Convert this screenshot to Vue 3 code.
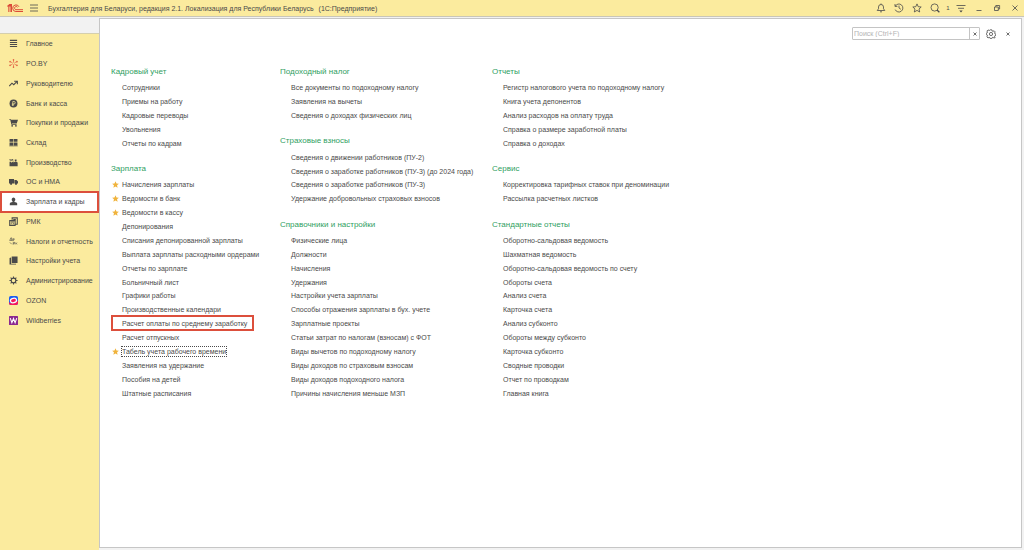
<script setup>
import { ref } from 'vue'

const search = ref('')

const sections = [
  { label: 'Главное', icon: 'lines' },
  { label: 'PO.BY', icon: 'spark' },
  { label: 'Руководителю', icon: 'trend' },
  { label: 'Банк и касса', icon: 'coin' },
  { label: 'Покупки и продажи', icon: 'cart' },
  { label: 'Склад', icon: 'boxes' },
  { label: 'Производство', icon: 'factory' },
  { label: 'ОС и НМА', icon: 'truck' },
  { label: 'Зарплата и кадры', icon: 'person', active: true },
  { label: 'РМК', icon: 'register' },
  { label: 'Налоги и отчетность', icon: 'taxes' },
  { label: 'Настройки учета', icon: 'books' },
  { label: 'Администрирование', icon: 'gear' },
  { label: 'OZON', icon: 'ozon' },
  { label: 'Wildberries', icon: 'wb' },
]

const columns = [
  [
    {
      title: 'Кадровый учет',
      items: ['Сотрудники', 'Приемы на работу', 'Кадровые переводы', 'Увольнения', 'Отчеты по кадрам'],
    },
    {
      title: 'Зарплата',
      items: [
        'Начисления зарплаты', 'Ведомости в банк', 'Ведомости в кассу', 'Депонирования',
        'Списания депонированной зарплаты', 'Выплата зарплаты расходными ордерами',
        'Отчеты по зарплате', 'Больничный лист', 'Графики работы', 'Производственные календари',
        'Расчет оплаты по среднему заработку', 'Расчет отпускных', 'Табель учета рабочего времени',
        'Заявления на удержание', 'Пособия на детей', 'Штатные расписания',
      ],
    },
  ],
  [
    {
      title: 'Подоходный налог',
      items: ['Все документы по подоходному налогу', 'Заявления на вычеты', 'Сведения о доходах физических лиц'],
    },
    {
      title: 'Страховые взносы',
      items: [
        'Сведения о движении работников (ПУ-2)', 'Сведения о заработке работников (ПУ-3) (до 2024 года)',
        'Сведения о заработке работников (ПУ-3)', 'Удержание добровольных страховых взносов',
      ],
    },
    {
      title: 'Справочники и настройки',
      items: [
        'Физические лица', 'Должности', 'Начисления', 'Удержания', 'Настройки учета зарплаты',
        'Способы отражения зарплаты в бух. учете', 'Зарплатные проекты',
        'Статьи затрат по налогам (взносам) с ФОТ', 'Виды вычетов по подоходному налогу',
        'Виды доходов по страховым взносам', 'Виды доходов подоходного налога',
        'Причины начисления меньше МЗП',
      ],
    },
  ],
  [
    {
      title: 'Отчеты',
      items: [
        'Регистр налогового учета по подоходному налогу', 'Книга учета депонентов',
        'Анализ расходов на оплату труда', 'Справка о размере заработной платы', 'Справка о доходах',
      ],
    },
    {
      title: 'Сервис',
      items: ['Корректировка тарифных ставок при деноминации', 'Рассылка расчетных листков'],
    },
    {
      title: 'Стандартные отчеты',
      items: [
        'Оборотно-сальдовая ведомость', 'Шахматная ведомость', 'Оборотно-сальдовая ведомость по счету',
        'Обороты счета', 'Анализ счета', 'Карточка счета', 'Анализ субконто',
        'Обороты между субконто', 'Карточка субконто', 'Сводные проводки', 'Отчет по проводкам',
        'Главная книга',
      ],
    },
  ],
]

const starred = new Set(['Начисления зарплаты', 'Ведомости в банк', 'Ведомости в кассу', 'Табель учета рабочего времени'])
const marked = 'Расчет оплаты по среднему заработку'
const focused = 'Табель учета рабочего времени'
</script>

<template>
  <div class="app">
    <header class="topbar">
      <svg class="logo" viewBox="0 0 16 10" aria-label="1С" role="img">
        <path d="M0 3 2.4 1H5v8H3.4V3.6h-1V9H1.3V3.6H0z" fill="#dc4a38" />
        <g fill="none" stroke="#dc4a38" stroke-width="1">
          <path d="M12 3.8A3.3 3.3 0 1 0 9 8.500h7" />
          <path d="M10.5 4.2A1.6 1.6 0 1 0 9 6.7h7" />
        </g>
      </svg>
      <button class="ic menu" aria-label="Меню">
        <svg viewBox="0 0 8 8"><path d="M0 1h8M0 4h8M0 7h8" /></svg>
      </button>
      <h1>Бухгалтерия для Беларуси, редакция 2.1. Локализация для Республики Беларусь <span>(1С:Предприятие)</span></h1>
      <div class="tools">
        <button class="ic" aria-label="Уведомления">
          <svg viewBox="0 0 10 10"><path d="M1.2 7.5h7.6L7.5 5.8V4a2.5 2.5 0 0 0-5 0v1.8zM5 .5v1M4 8.8h2" /></svg>
        </button>
        <button class="ic" aria-label="История">
          <svg viewBox="0 0 10 10"><path d="M1.3 3.2A4 4 0 1 1 1.2 6.6M1 1v2.4h2.4M5 2.6V5l1.9 1.3" /></svg>
        </button>
        <button class="ic" aria-label="Избранное">
          <svg viewBox="0 0 10 10"><path d="M5 .9 6.2 3.7l3 .3L7 6l.7 3L5 7.4 2.3 9 3 6 .8 4l3-.3z" /></svg>
        </button>
        <button class="ic" aria-label="Поиск">
          <svg viewBox="0 0 10 10"><circle cx="4.6" cy="4.5" r="3.6" /><path d="m7 7 2.4 2.2" stroke-width="1.3" /></svg>
        </button>
        <span class="count">1</span>
        <button class="ic" aria-label="Сервис">
          <svg viewBox="0 0 10 10"><path d="M.5 2.5h9M2 5.3h6" /><path d="M3.3 7.5h3.4L5 9.4z" class="solid" /></svg>
        </button>
        <button class="ic" aria-label="Свернуть">
          <svg viewBox="0 0 10 10"><path d="M2.5 7.5h5" /></svg>
        </button>
        <button class="ic" aria-label="Развернуть">
          <svg viewBox="0 0 10 10"><path d="M2.5 4h3.8v3.5H2.5zM3.8 4V2.5h3.8V6H6.3" /></svg>
        </button>
        <button class="ic" aria-label="Закрыть">
          <svg viewBox="0 0 10 10"><path d="m2.5 2.5 5 5m0-5-5 5" /></svg>
        </button>
      </div>
    </header>

    <div class="body">
      <nav class="side" aria-label="Разделы">
        <div class="side-list">
          <a v-for="s in sections" :key="s.label" href="#" :class="{ active: s.active }">
            <svg viewBox="0 0 10 10" aria-hidden="true">
              <path v-if="s.icon === 'lines'" d="M1 1.5h8M1 3.8h8M1 6.1h8M1 8.4h8" class="line" />
              <g v-else-if="s.icon === 'spark'" class="red">
                <path d="M5 4V1.5M5.9 4.5l2.3-1.3M5.9 5.5l2.3 1.3M5 6v2.5M4.1 5.5 1.8 6.8M4.1 4.5 1.8 3.2" />
                <circle cx="5" cy="1" r=".6" /><circle cx="8.8" cy="3" r=".6" /><circle cx="8.8" cy="7" r=".6" />
                <circle cx="5" cy="9" r=".6" /><circle cx="1.2" cy="3" r=".6" /><circle cx="1.2" cy="7" r=".6" />
              </g>
              <path v-else-if="s.icon === 'trend'" d="m.3 7.8 3-3.2 2 1.7L8.700 3M5.700 2.500h3.600v3.300" class="line" />
              <g v-else-if="s.icon === 'coin'">
                <circle cx="5" cy="5" r="4.4" />
                <path d="M4.2 7.8V2.8h1.4a1.3 1.3 0 0 1 0 2.7H3.2M3.2 6.6h2.4" class="cut" />
              </g>
              <g v-else-if="s.icon === 'cart'">
                <path d="M0 1h1.8l.4 1H10L8.6 6H3.2l.2.7h5v.8H2.7L1.3 1.8H0z" />
                <circle cx="3.5" cy="8.7" r="1" /><circle cx="7.7" cy="8.7" r="1" />
              </g>
              <path v-else-if="s.icon === 'boxes'" d="M.6 1h4.1v3.3H.6zM5.3 1h4.1v3.3H5.3zM.6 5h4.1v3.2H.6zM5.3 5h4.1v3.2H5.3zM.3 8.5h9.4v.7H.3z" />
              <path v-else-if="s.icon === 'factory'" d="M.6 9.3v-5h1.8v.9L5 3.6V5l2.6-1.500L9.600 5v4.300zM.6 1.200l1.800.7 1.200-.7 1.300.7v.9L3.200 2.700 2.300 3 .6 2.500zM6.400 1.800h2v1.400h-2z" />
              <g v-else-if="s.icon === 'truck'">
                <path d="M0 2.3h5.6v5H0zM6 3.3h2.3L10 5v2.3H6z" />
                <circle cx="2.3" cy="7.6" r="1.2" /><circle cx="7.8" cy="7.6" r="1.2" />
              </g>
              <path v-else-if="s.icon === 'person'" d="M5 .6a2.2 2.2 0 0 1 1.1 4v.9c1.6.3 3 .8 3 1.8v1.9H.9V7.300C.9 6.300 2.300 5.800 3.900 5.500v-.9A2.200 2.200 0 0 1 5 .6z" />
              <g v-else-if="s.icon === 'register'">
                <path d="M.8 4h6v5.3h-6zM3.500 3V1h5.700v7H7.300" class="line" />
                <path d="M2 5h3.5v1H2zM2 7h1v1H2zM4.2 7h1.2v1H4.2zM4.8 2.2h2.8v1.4H4.8z" />
              </g>
              <path
                v-else-if="s.icon === 'taxes'"
                class="thin"
                d="M.6 3.8h3M1 3.7 2 1h1v2.7M4.300 4.600V2h1.500l-.4 1.500H4.300M1 6l2 2M4.700 8.400V6h1.600L6 7.400H4.700M7 6.200l1.800 2M8.800 6.200 7 8.200"
              />
              <path v-else-if="s.icon === 'books'" d="M3 .5h6.5v7.3H3zM2.3 1.8v6.7h5.5v1H.6V2.3z" />
              <g v-else-if="s.icon === 'gear'">
                <circle cx="5" cy="5" r="2.6" class="line" />
                <path d="M5 .5v2M5 7.5v2M.5 5h2M7.5 5h2M1.8 1.8l1.4 1.4M6.8 6.8l1.4 1.4M8.2 1.8 6.8 3.2M3.2 6.8 1.8 8.2" class="line" />
              </g>
              <g v-else-if="s.icon === 'ozon'">
                <rect width="10" height="10" rx="2" fill="#1a5cf0" />
                <path d="M0 7c3 2 7 1 10-2v3a2 2 0 0 1-2 2H2a2 2 0 0 1-2-2z" fill="#f5195c" />
                <ellipse cx="5" cy="5" rx="3.4" ry="2.5" fill="#f5195c" stroke="#fff" stroke-width="1.4" transform="rotate(-12 5 5)" />
              </g>
              <g v-else>
                <rect width="10" height="10" rx=".6" fill="#8b2a90" />
                <path d="M1.4 2.4 3.2 7.5 5 2.8 6.8 7.5 8.6 2.4" fill="none" stroke="#fff" stroke-width="1.2" />
              </g>
            </svg>
            <span>{{ s.label }}</span>
          </a>
        </div>
      </nav>

      <main class="panel">
        <div class="bar">
          <div class="search">
            <input v-model="search" type="text" placeholder="Поиск (Ctrl+F)" aria-label="Поиск" />
            <button aria-label="Очистить"><svg viewBox="0 0 4 4"><path d="m.5.5 3 3m0-3-3 3" /></svg></button>
          </div>
          <button class="ic cog" aria-label="Настройка">
            <svg viewBox="0 0 10 10">
              <path d="M4.2.8h1.6l.3 1.2.9.4 1.1-.6 1.1 1.1-.6 1.1.3.8 1 .3v1.4l-1.1.3-.3.8.6 1.1L8 9l-1.1-.7-.8.3-.3 1H4.2l-.3-1-.8-.3L2 9 .9 7.8l.6-1-.3-.9-1-.3V4.200l1-.3.3-.8-.6-1.100L2 .9l1.100.6.8-.3z" />
              <circle cx="5" cy="5" r="1.6" />
            </svg>
          </button>
          <button class="ic small" aria-label="Закрыть меню"><svg viewBox="0 0 4 4"><path d="m.5.5 3 3m0-3-3 3" /></svg></button>
        </div>

        <div class="columns">
          <div v-for="(col, i) in columns" :key="i" class="column">
            <section v-for="g in col" :key="g.title" :style="{ gridRow: 'span ' + (g.items.length + (g === col[col.length - 1] ? 1 : 2)) }">
              <h2>{{ g.title }}</h2>
              <a v-for="item in g.items" :key="item" href="#" :class="{ marked: item === marked, focused: item === focused }">
                <svg v-if="starred.has(item)" class="star" viewBox="0 0 10 10" aria-hidden="true">
                  <path d="m5 .3 1.400 3.200 3.400.3L7.200 6l.8 3.500-3-1.800-3 1.800.8-3.500L.2 3.800l3.400-.3z" />
                </svg>
                {{ item }}
              </a>
            </section>
          </div>
        </div>
      </main>
    </div>
  </div>
</template>

<style>
html,
body,
#app {
  height: 100%;
}
body {
  margin: 0;
}
</style>

<style scoped>
.app {
  display: flex;
  flex-direction: column;
  min-height: 100%;
  background: #f2f2f2;
  color: #4a4a4a;
  font: 7px/13px "Liberation Sans", Arial, sans-serif;
}
a {
  color: inherit;
  text-decoration: none;
}
button {
  padding: 0;
  border: 0;
  background: none;
  color: inherit;
  font: inherit;
}
svg {
  display: block;
  flex: none;
}
.topbar {
  display: flex;
  align-items: center;
  height: 16px;
  padding-left: 7px;
  background: #fbeb9e;
  border-bottom: 1px solid #c9c6b8;
}
.logo {
  width: 16px;
  height: 10px;
}
.ic svg {
  width: 10px;
  height: 10px;
  fill: none;
  stroke: #4a4a4a;
  stroke-width: 0.8;
}
.ic .solid {
  fill: #4a4a4a;
  stroke: none;
}
.menu {
  margin: 0 10px 0 7px;
}
.menu svg {
  width: 8px;
  height: 8px;
}
h1 {
  flex: 1;
  margin: 0;
  font-size: 7px;
  font-weight: 400;
  white-space: nowrap;
}
h1 span {
  margin-left: 3px;
}
.tools {
  display: flex;
  align-items: center;
}
.tools .ic {
  display: flex;
  justify-content: center;
  width: 18px;
}
.count {
  width: 8px;
  text-align: center;
  font-size: 6px;
}
.body {
  display: flex;
  flex: 1;
}
.side {
  width: 99px;
  margin-top: 16px;
  border-top: 1px solid #d5cfae;
  background: #fbeb9e;
}
.side-list {
  display: grid;
  grid-template-rows: repeat(15, 1fr);
  height: 296px;
}
.side a {
  display: flex;
  align-items: center;
  gap: 8px;
  padding-left: 9px;
  white-space: nowrap;
}
.side a svg {
  width: 9px;
  height: 9px;
  fill: #4a4a4a;
}
.side .active {
  margin: -1px 0;
  padding-left: 7px;
  border: 2px solid #dc4f3c;
  background: #fff;
}
.side .line {
  fill: none;
  stroke: #4a4a4a;
  stroke-width: 1.2;
}
.side .thin {
  fill: none;
  stroke: #4a4a4a;
  stroke-width: 0.7;
}
.side .cut {
  fill: none;
  stroke: #fbeb9e;
  stroke-width: 0.8;
}
.side .red {
  fill: #e0593e;
  stroke: #e0593e;
  stroke-width: 0.7;
}
.panel {
  flex: 1;
  margin: 1px 2px 2px 0;
  border: 1px solid #c6c6c6;
  background: #fff;
}
.bar {
  display: flex;
  align-items: center;
  justify-content: flex-end;
  padding: 8px 11px 0 0;
}
.search {
  display: flex;
  width: 126px;
  height: 11px;
  border: 1px solid #c4c4c4;
  border-radius: 1px;
}
.search input {
  flex: 1;
  min-width: 0;
  padding: 0 1px;
  border: 0;
  outline: 0;
  font: inherit;
  line-height: 11px;
}
.search input::placeholder {
  color: #b4b4b4;
}
.search button {
  display: grid;
  place-items: center;
  width: 10px;
  border-left: 1px solid #c4c4c4;
}
.search svg,
.small svg {
  width: 4px;
  height: 4px;
  fill: none;
  stroke: #4a4a4a;
  stroke-width: 0.8;
}
.cog {
  margin: 0 10px 0 6px;
}
.columns {
  display: grid;
  grid-template-columns: 169px 212px 1fr;
  padding: 27px 0 0 11px;
}
.column {
  display: grid;
  grid-template-rows: repeat(24, 1fr);
  justify-items: start;
  height: 333px;
}
section {
  display: grid;
  grid-template-rows: subgrid;
  align-items: center;
  justify-items: start;
}
h2 {
  align-self: start;
  margin: -2px 0 0;
  color: #2fa05f;
  font-size: 8px;
  font-weight: 400;
  line-height: 14px;
}
section a {
  position: relative;
  margin-left: 11px;
  white-space: nowrap;
}
.star {
  position: absolute;
  top: 3px;
  left: -10px;
  width: 7px;
  height: 7px;
  fill: #f0b33c;
}
.marked::after {
  content: "";
  position: absolute;
  inset: -2px -7px -1px -11px;
  border: 2px solid #dc4f3c;
}
.focused::after {
  content: "";
  position: absolute;
  inset: 1px -1px;
  border: 1px dotted #4a4a4a;
}
</style>
